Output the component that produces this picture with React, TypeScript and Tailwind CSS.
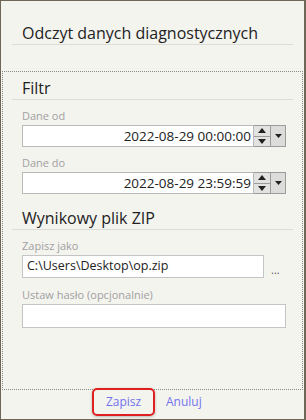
import React from "react";

function Section({ title }: { title: string }) {
  return (
    <div className="mx-[9px] border-b border-[#dcdcd8] pl-[10px] text-[16px] leading-[22px] text-[#222]">
      {title}
    </div>
  );
}

function Label({ children }: { children: React.ReactNode }) {
  return <div className="pl-[19px] text-[11px] leading-[14px] text-[#a0a0a0]">{children}</div>;
}

function DateField({ value }: { value: string }) {
  return (
    <div className="ml-[19px] flex h-[22px] w-[264px]">
      <div className="flex flex-1 items-center justify-end border border-[#b9b9b9] bg-white pr-[2px] text-[13.5px] text-[#222]">
        {value}
      </div>
      <div className="flex w-[17px] flex-col border border-l-0 border-[#9c9c9c] bg-[#e2e2e0]">
        <div className="flex flex-1 items-center justify-center border-b border-[#9c9c9c]">
          <svg width="8" height="5" viewBox="0 0 8 5">
            <path d="M0 5 L4 0 L8 5 Z" fill="#222" />
          </svg>
        </div>
        <div className="flex flex-1 items-center justify-center">
          <svg width="8" height="5" viewBox="0 0 8 5">
            <path d="M0 0 L4 5 L8 0 Z" fill="#222" />
          </svg>
        </div>
      </div>
      <div className="flex w-[15px] items-center justify-center border border-l-0 border-[#9c9c9c] bg-[#dcdcda]">
        <svg width="7" height="4" viewBox="0 0 7 4">
          <path d="M0 0 L3.5 4 L7 0 Z" fill="#222" />
        </svg>
      </div>
    </div>
  );
}

export default function App() {
  return (
    <div
      className="flex h-[420px] w-[306px] flex-col border border-r-2 border-[#6e6656] bg-[#f4f4ef]"
      style={{ fontFamily: '"Open Sans", "Noto Sans", sans-serif' }}
    >
      <div className="pt-[22px]">
        <div className="mx-[11px] border-b border-[#dcdcd8] pl-[10px] text-[16px] leading-[21px] text-[#222]">
          Odczyt danych diagnostycznych
        </div>
      </div>

      <div className="mx-[1px] mt-[26px] flex-1 border border-dotted border-[#8a8a8a] pt-[5px]">
        <Section title="Filtr" />
        <div className="mt-[9px]">
          <Label>Dane od</Label>
          <div className="mt-[2px]">
            <DateField value="2022-08-29 00:00:00" />
          </div>
        </div>
        <div className="mt-[9px]">
          <Label>Dane do</Label>
          <div className="mt-[2px]">
            <DateField value="2022-08-29 23:59:59" />
          </div>
        </div>

        <div className="mt-[13px]">
          <Section title="Wynikowy plik ZIP" />
        </div>
        <div className="mt-[9px]">
          <Label>Zapisz jako</Label>
          <div className="mt-[2px] flex items-end">
            <div className="ml-[19px] flex h-[23px] w-[242px] items-center border border-[#c4c4c4] bg-white pl-[4px] text-[12.5px] text-[#222]">
              C:\Users\Desktop\op.zip
            </div>
            <div className="ml-[7px] pb-[3px] text-[11px] leading-[11px] text-[#555]">...</div>
          </div>
        </div>
        <div className="mt-[10px]">
          <Label>Ustaw hasło (opcjonalnie)</Label>
          <div className="mt-[2px] ml-[19px] h-[24px] w-[264px] border border-[#c4c4c4] bg-white" />
        </div>
      </div>

      <div className="flex h-[29px] items-start pl-[91px]">
        <button className="-mt-[2px] h-[28px] w-[63px] rounded-[5px] border-2 border-[#e02020] text-[12px] text-[#7272ee] shadow-[0_1px_3px_rgba(0,0,0,0.25)]">
          Zapisz
        </button>
        <button className="-mt-[2px] ml-[11px] h-[28px] text-[12px] text-[#7272ee]">Anuluj</button>
      </div>
    </div>
  );
}
